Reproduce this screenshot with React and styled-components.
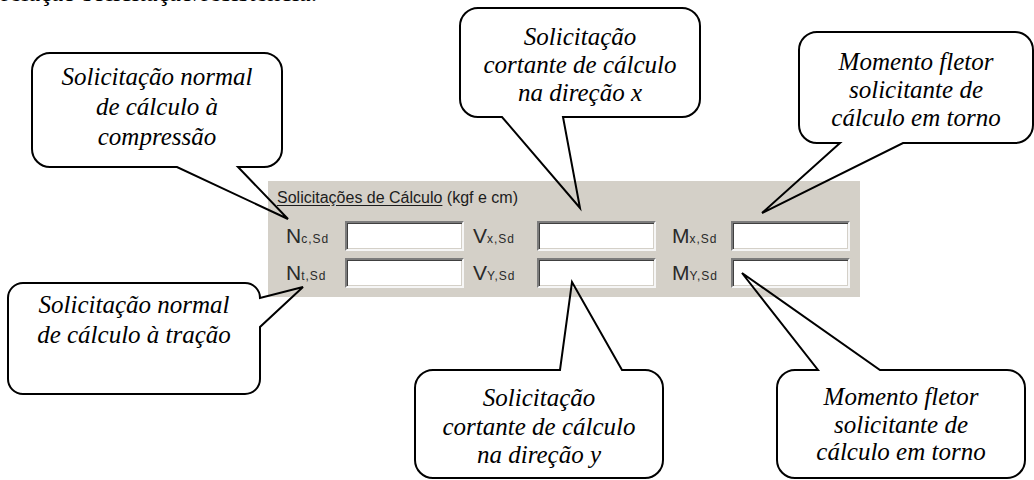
import React from 'react'
import styled, { createGlobalStyle } from 'styled-components'

const GlobalStyle = createGlobalStyle`
  html, body {
    margin: 0;
    padding: 0;
    background: #ffffff;
  }
`

const Figure = styled.div`
  position: relative;
  width: 1034px;
  height: 480px;
  overflow: hidden;
  background: #ffffff;
`

const CutLine = styled.div`
  margin: -21px 0 0 1px;
  font-family: "Liberation Serif", "Times New Roman", serif;
  font-size: 26px;
  line-height: 28px;
  color: #000;
  white-space: nowrap;
`

const Panel = styled.div`
  box-sizing: border-box;
  margin: 174px 0 0 268px;
  width: 592px;
  height: 116px;
  padding: 7px 0 0 9px;
  background: #d4d0c8;
  font-family: "Liberation Sans", Arial, sans-serif;
  color: #1c1c1c;
`

const Title = styled.div`
  font-size: 16px;
  line-height: 20px;
  white-space: nowrap;
  u {
    text-decoration: underline;
    text-underline-offset: 2px;
  }
`

const Fields = styled.div`
  display: grid;
  grid-template-columns: 59px 119px 73px 119px 75px 119px;
  grid-auto-rows: 30px;
  row-gap: 7px;
  margin-top: 13px;
  padding-left: 9px;
`

const Label = styled.div`
  display: flex;
  align-items: baseline;
  padding-left: ${p => p.$indent || 0}px;
  padding-top: 3px;
  font-size: 21px;
  line-height: 24px;
  color: #2a2a2a;
`

const Sub = styled.span`
  font-size: 12px;
  letter-spacing: 1px;
`

const Input = styled.div`
  box-sizing: border-box;
  height: 30px;
  background: #ffffff;
  border: 2px solid;
  border-color: #7c7c7c #f6f6f6 #f6f6f6 #7c7c7c;
  box-shadow: inset 1px 1px 0 #404040, inset -1px -1px 0 #d4d0c8;
`

const Overlay = styled.svg`
  position: absolute;
  left: 0;
  top: 0;
  pointer-events: none;
`

const CalloutText = styled.div`
  position: absolute;
  text-align: center;
  font-family: "Liberation Serif", "Times New Roman", serif;
  font-style: italic;
  font-size: 25px;
  color: #000;
  white-space: nowrap;
  span {
    display: block;
  }
`

const callouts = [
  { id: 'nc', x: 32, y: 53, w: 250, h: 114, r: 18, tail: { side: 'bottom', a: 177, b: 238, tip: [288, 219] }, top: 62, lh: 30, lines: ['Solicitação normal', 'de cálculo à', 'compressão'] },
  { id: 'vx', x: 460, y: 8, w: 240, h: 109, r: 18, tail: { side: 'bottom', a: 502, b: 563, tip: [580, 208] }, top: 23, lh: 28, lines: ['Solicitação', 'cortante de cálculo', 'na direção x'] },
  { id: 'mx', x: 799, y: 32, w: 234, h: 111, r: 18, tail: { side: 'bottom', a: 840, b: 903, tip: [762, 213] }, top: 48, lh: 28, lines: ['Momento fletor', 'solicitante de', 'cálculo em torno'] },
  { id: 'nt', x: 8, y: 283, w: 252, h: 111, r: 15, tail: { side: 'right', a: 298, b: 327, tip: [303, 287] }, top: 290, lh: 30, lines: ['Solicitação normal', 'de cálculo à tração'] },
  { id: 'vy', x: 415, y: 370, w: 248, h: 108, r: 18, tail: { side: 'top', a: 560, b: 622, tip: [572, 282] }, top: 384, lh: 28.5, lines: ['Solicitação', 'cortante de cálculo', 'na direção y'] },
  { id: 'my', x: 777, y: 370, w: 248, h: 108, r: 18, tail: { side: 'top', a: 818, b: 880, tip: [742, 273] }, top: 383, lh: 27.5, lines: ['Momento fletor', 'solicitante de', 'cálculo em torno'] },
]

const fields = [
  [['N', 'c,Sd', 0], ['V', 'x,Sd', 9], ['M', 'x,Sd', 16]],
  [['N', 't,Sd', 0], ['V', 'Y,Sd', 9], ['M', 'Y,Sd', 16]],
]

// rounded box outline with the pointer cut into one side
const bubblePath = ({ x, y, w, h, r, tail }) => {
  const R = x + w
  const B = y + h
  const tip = `L ${tail.tip[0]} ${tail.tip[1]}`
  const d = [`M ${x + r} ${y}`]
  if (tail.side === 'top') d.push(`L ${tail.a} ${y}`, tip, `L ${tail.b} ${y}`)
  d.push(`L ${R - r} ${y}`, `A ${r} ${r} 0 0 1 ${R} ${y + r}`)
  if (tail.side === 'right') d.push(`L ${R} ${tail.a}`, tip, `L ${R} ${tail.b}`)
  d.push(`L ${R} ${B - r}`, `A ${r} ${r} 0 0 1 ${R - r} ${B}`)
  if (tail.side === 'bottom') d.push(`L ${tail.b} ${B}`, tip, `L ${tail.a} ${B}`)
  d.push(`L ${x + r} ${B}`, `A ${r} ${r} 0 0 1 ${x} ${B - r}`)
  d.push(`L ${x} ${y + r}`, `A ${r} ${r} 0 0 1 ${x + r} ${y}`, 'Z')
  return d.join(' ')
}

const App = () => {
  return (
    <Figure>
      <GlobalStyle />
      <CutLine>relação solicitação/resistência.</CutLine>
      <Panel>
        <Title><u>Solicitações de Cálculo</u> (kgf e cm)</Title>
        <Fields>
          {fields.map((row, i) =>
            row.map(([sym, sub, indent]) => (
              <React.Fragment key={`${i}-${sym}`}>
                <Label $indent={indent}>{sym}<Sub>{sub}</Sub></Label>
                <Input />
              </React.Fragment>
            ))
          )}
        </Fields>
      </Panel>
      <Overlay width="1034" height="480" viewBox="0 0 1034 480">
        {callouts.map(c => (
          <path key={c.id} d={bubblePath(c)} fill="none" stroke="#000" strokeWidth="2" strokeLinejoin="miter" />
        ))}
      </Overlay>
      {callouts.map(c => (
        <CalloutText key={c.id} style={{ left: c.x, top: c.top, width: c.w, lineHeight: `${c.lh}px` }}>
          {c.lines.map(l => <span key={l}>{l}</span>)}
        </CalloutText>
      ))}
    </Figure>
  )
}

export default App
